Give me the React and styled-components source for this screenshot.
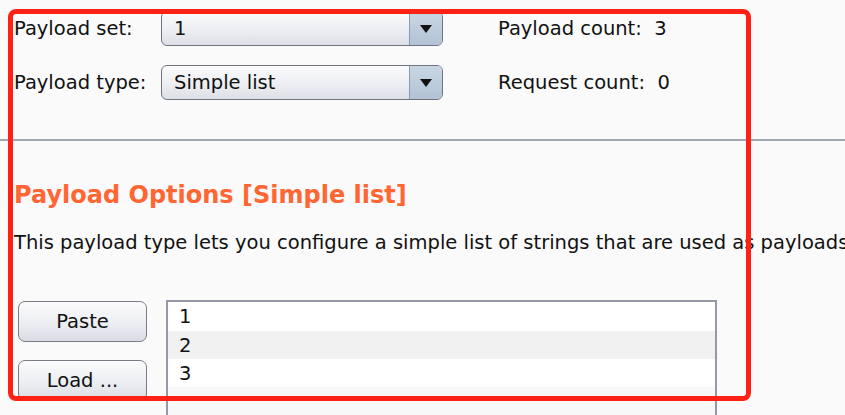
import React from "react";
import styled, { createGlobalStyle } from "styled-components";

const Global = createGlobalStyle`
  html, body { margin: 0; padding: 0; background: #fafafa; }
  body { font-family: "DejaVu Sans", "Liberation Sans", sans-serif; color: #111; overflow: hidden; }
  #root { width: 845px; height: 415px; }
`;

const Page = styled.div`
  position: relative;
  width: 845px;
  height: 415px;
  overflow: hidden;
  background: #fafafa;
`;

const Top = styled.div`
  display: grid;
  grid-template-columns: 147px 282px auto;
  grid-auto-rows: 35px;
  row-gap: 19px;
  align-items: center;
  padding: 11px 0 39px 14px;
  font-size: 19.5px;
`;

const Label = styled.span`
  white-space: nowrap;
`;

const Combo = styled.div`
  display: flex;
  height: 35px;
  box-sizing: border-box;
  border: 1px solid #6f7480;
  border-radius: 6px;
  overflow: hidden;
  background: linear-gradient(#fbfbfc, #eceef2 55%, #dcdfe6);
  box-shadow: inset 0 1px 0 #fff;
`;

const ComboText = styled.span`
  flex: 1;
  display: flex;
  align-items: center;
  padding-left: 12px;
`;

const Arrow = styled.span`
  width: 32px;
  display: flex;
  align-items: center;
  justify-content: center;
  border-left: 1px solid #8a9ab0;
  background: linear-gradient(#c9d6e4, #b2c3d6);
`;

const Count = styled.span`
  white-space: nowrap;
  margin-left: 55px;
`;

const Separator = styled.hr`
  margin: 0;
  border: 0;
  height: 2px;
  background: #a3a7b0;
`;

const Section = styled.div`
  padding: 38px 0 0 14px;
`;

const Heading = styled.h2`
  margin: 0;
  font-size: 24px;
  font-weight: bold;
  color: #ff6633;
  line-height: 32px;
`;

const Desc = styled.p`
  margin: 20px 0 0;
  font-size: 19.5px;
  line-height: 24px;
  white-space: nowrap;
`;

const Body = styled.div`
  display: flex;
  gap: 19px;
  margin-top: 45px;
  padding-left: 4px;
`;

const Buttons = styled.div`
  display: flex;
  flex-direction: column;
  gap: 18px;
  padding-top: 1px;
`;

const Button = styled.button`
  width: 129px;
  height: 41px;
  box-sizing: border-box;
  border: 1px solid #787c86;
  border-radius: 7px;
  background: linear-gradient(#fbfbfc, #eceef2 55%, #d9dce4);
  font-family: inherit;
  font-size: 19.5px;
  color: #111;
  padding: 0;
`;

const List = styled.div`
  width: 551px;
  height: 140px;
  box-sizing: border-box;
  border: 2px solid #9599a6;
  border-bottom: 0;
  background: #f8f8f8;
`;

const Row = styled.div`
  height: ${(p) => (p.$first ? 29 : 28)}px;
  display: flex;
  align-items: center;
  padding-left: 11px;
  font-size: 19.5px;
  background: ${(p) => (p.$alt ? "#f1f1f1" : "#ffffff")};
`;

const Highlight = styled.div`
  position: absolute;
  left: 8px;
  top: 9px;
  width: 743px;
  height: 392px;
  box-sizing: border-box;
  border: 5px solid #ff2016;
  border-radius: 8px;
  pointer-events: none;
`;

const Tri = () => (
  <svg width="12" height="10" viewBox="0 0 12 10">
    <path d="M0 1 L12 1 L6 9 Z" fill="#111" />
  </svg>
);

export default function App() {
  return (
    <Page>
      <Global />
      <Top>
        <Label>Payload set:</Label>
        <Combo>
          <ComboText>1</ComboText>
          <Arrow><Tri /></Arrow>
        </Combo>
        <Count>Payload count:&nbsp; 3</Count>
        <Label>Payload type:</Label>
        <Combo>
          <ComboText>Simple list</ComboText>
          <Arrow><Tri /></Arrow>
        </Combo>
        <Count>Request count:&nbsp; 0</Count>
      </Top>
      <Separator />
      <Section>
        <Heading>Payload Options [Simple list]</Heading>
        <Desc>This payload type lets you configure a simple list of strings that are used as payloads.</Desc>
        <Body>
          <Buttons>
            <Button>Paste</Button>
            <Button>Load ...</Button>
          </Buttons>
          <List>
            <Row $first>1</Row>
            <Row $alt>2</Row>
            <Row>3</Row>
          </List>
        </Body>
      </Section>
      <Highlight />
    </Page>
  );
}
